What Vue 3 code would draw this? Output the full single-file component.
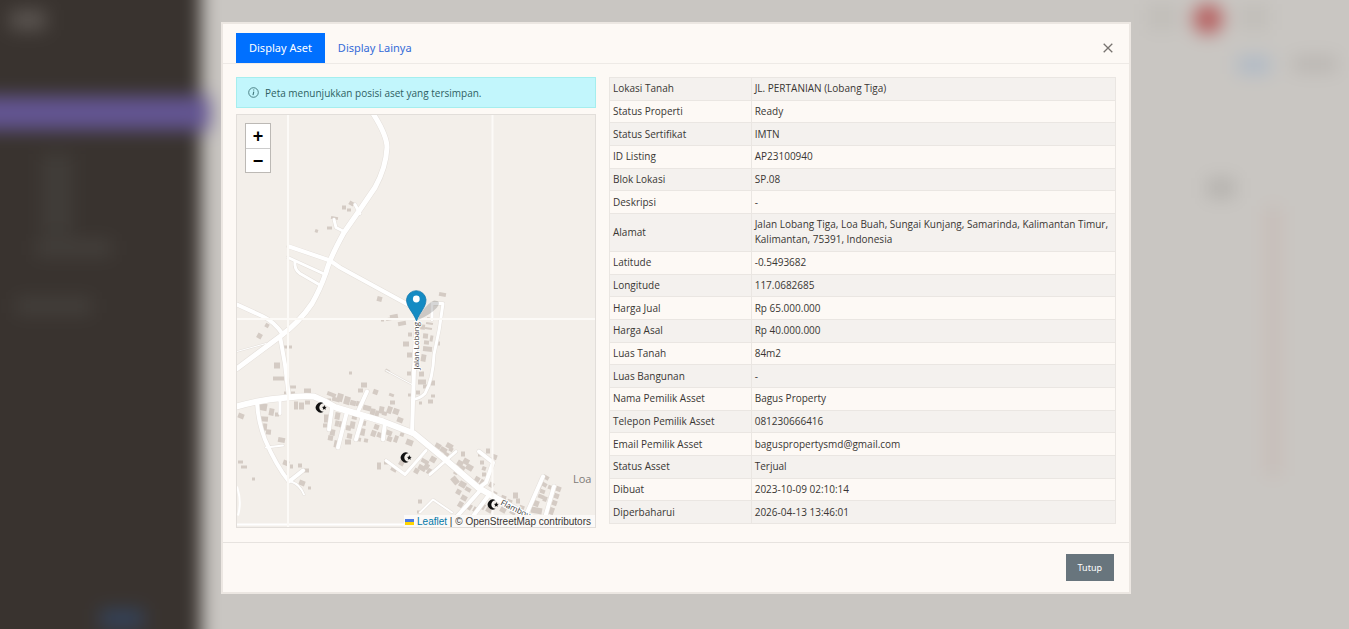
<script setup>
const tabs = [
  { label: 'Display Aset', active: true },
  { label: 'Display Lainya', active: false },
]

const rows = [
  ['Lokasi Tanah', 'JL. PERTANIAN (Lobang Tiga)'],
  ['Status Properti', 'Ready'],
  ['Status Sertifikat', 'IMTN'],
  ['ID Listing', 'AP23100940'],
  ['Blok Lokasi', 'SP.08'],
  ['Deskripsi', '-'],
  ['Alamat', 'Jalan Lobang Tiga, Loa Buah, Sungai Kunjang, Samarinda, Kalimantan Timur, Kalimantan, 75391, Indonesia'],
  ['Latitude', '-0.5493682'],
  ['Longitude', '117.0682685'],
  ['Harga Jual', 'Rp 65.000.000'],
  ['Harga Asal', 'Rp 40.000.000'],
  ['Luas Tanah', '84m2'],
  ['Luas Bangunan', '-'],
  ['Nama Pemilik Asset', 'Bagus Property'],
  ['Telepon Pemilik Asset', '081230666416'],
  ['Email Pemilik Asset', 'baguspropertysmd@gmail.com'],
  ['Status Asset', 'Terjual'],
  ['Dibuat', '2023-10-09 02:10:14'],
  ['Diperbaharui', '2026-04-13 13:46:01'],
]

const roads = [
  { w: 5, d: 'M373 114 Q387 136 387 148 Q386 168 375 188 L360 210 L344 233 Q330 258 326 273 Q320 290 312 304 Q300 322 280 337 L237 369' },
  { w: 4, d: 'M289 247 L330 261 L340 268 L417 310' },
  { w: 3, d: 'M288 258 L323 274' },
  { w: 3, d: 'M295 262 Q294 270 300 274 L319 285' },
  { w: 4, d: 'M237 305 L263 317 Q274 322 283 335' },
  { w: 4, d: 'M280 337 L285 365 L289 398' },
  { w: 6, d: 'M237 407 Q260 400 288 398 Q304 396 314 397 Q326 402 336 408 L383 422 L414 434 L443 458 L478 488 L530 518' },
  { w: 4, d: 'M257 403 Q258 422 265 440 Q276 466 289 482 L303 471' },
  { w: 2, d: 'M291 482 Q300 485 304 495' },
  { w: 3, d: 'M280 400 V414' },
  { w: 2, d: 'M266 448 L283 446' },
  { w: 4, d: 'M332 408 L329 430' },
  { w: 4, d: 'M347 412 L338 448' },
  { w: 4, d: 'M363 416 L356 440' },
  { w: 4, d: 'M358 412 L367 392' },
  { w: 4, d: 'M385 423 L383 440' },
  { w: 4, d: 'M412 434 L414 370 L417 316' },
  { w: 3, d: 'M432 320 V304 H443 Q440 330 434 355 Q433 380 425 394 Q420 399 413 400' },
  { w: 3, d: 'M386 461 L405 475 L426 451' },
  { w: 3, d: 'M430 475 L456 452' },
  { w: 4, d: 'M479 452 L493 463 L486 483 L478 489' },
  { w: 4, d: 'M481 490 L456 518' },
  { w: 4, d: 'M490 494 L472 518' },
  { w: 2, d: 'M420 513 L433 500 L452 513' },
  { w: 4, d: 'M525 518 L543 477' },
  { w: 4, d: 'M545 518 L554 487' },
  { w: 3, d: 'M360 214 L355 205' },
  { w: 3, d: 'M344 232 L336 228 L334 220' },
  { w: 1, d: 'M386 371 L412 385' },
  { w: 1, d: 'M237 352 L266 344' },
]

// x, y, width, height, rotation
const buildings = [
  [349,202,5,4,30],[342,206,4,4,0],[347,209,4,3,0],[331,217,7,3,10],[327,227,5,3,0],[315,230,3,3,20],
  [377,297,5,5,15],[386,318,7,3,-10],[381,320,3,2,0],[390,315,8,5,-10],[398,322,8,4,-10],[439,293,7,4,10],
  [408,333,4,4,0],[403,342,6,5,0],[407,353,5,5,0],[420,325,5,5,5],[423,334,5,5,5],[424,341,5,4,5],[423,347,9,5,5],[421,355,5,7,10],[436,342,4,4,0],
  [418,326,2,8,0],[427,318,7,2,10],[426,323,7,2,10],[425,328,7,2,10],[430,336,3,6,10],
  [265,324,4,4,30],[257,334,5,5,30],[284,346,8,3,0],[274,363,6,6,0],[273,377,11,4,0],[290,386,6,3,0],[284,392,3,3,0],[291,392,4,4,0],[304,389,7,6,0],
  [349,372,3,3,0],[385,370,5,3,30],[361,383,6,5,0],[358,389,5,4,0],[373,390,5,5,20],[389,394,5,3,20],[390,401,5,4,0],[407,372,4,4,0],[408,394,4,3,0],
  [419,372,5,5,0],[418,380,8,5,0],[423,385,4,4,0],[431,381,4,5,0],[416,391,4,4,0],[419,402,3,3,0],[428,400,5,4,0],[431,395,4,3,0],
  [259,404,8,7,10],[269,409,5,7,10],[275,413,4,4,0],[260,417,8,5,5],[263,424,4,7,5],[266,430,5,5,5],[238,414,6,5,20],[278,438,7,5,10],
  [294,402,4,8,0],[299,403,5,7,0],[305,401,5,4,0],[289,394,4,4,0],
  [327,393,9,4,20],[332,398,8,4,15],[337,394,6,8,15],[344,397,6,8,15],[350,401,6,5,15],[356,402,6,5,15],[327,399,4,6,0],
  [324,415,5,8,0],[323,424,4,4,0],[335,413,5,7,10],[339,422,5,6,10],[335,421,4,6,10],[330,430,5,6,10],[328,436,5,5,10],[346,426,5,5,10],[347,434,5,5,10],[334,441,5,7,10],[345,440,6,5,0],
  [352,415,5,5,10],[350,422,5,7,10],[361,421,5,5,10],[360,429,5,7,10],[357,438,4,4,10],[364,439,4,4,10],
  [363,406,8,5,15],[370,409,5,8,10],[375,411,4,6,10],[379,407,5,7,10],[382,412,5,4,15],[387,407,5,7,20],[393,409,6,6,20],[397,418,6,5,20],
  [374,425,5,5,20],[371,431,5,6,20],[377,433,5,5,20],[386,431,6,5,20],[387,437,5,5,20],[394,436,4,7,20],[400,433,4,4,20],[406,440,7,6,20],
  [238,461,5,3,0],[241,466,6,3,0],[252,478,3,3,0],[283,461,6,5,20],[290,465,3,4,0],[298,464,4,4,0],[303,469,6,4,0],[299,481,6,5,20],[308,487,3,3,0],
  [377,463,4,7,0],[384,460,4,5,0],[391,467,6,5,30],[399,461,5,5,30],[414,469,5,5,30],
  [418,500,4,4,0],[417,511,4,3,0],
  [435,444,6,5,30],[440,448,7,5,30],[446,444,7,5,30],[444,453,5,4,30],[449,448,4,4,30],[421,460,8,4,30],[418,466,8,5,30],[424,464,5,6,30],[427,469,5,6,30],[430,457,6,6,30],
  [461,452,4,5,0],[457,461,6,6,30],[463,459,6,6,30],[466,465,7,6,30],[459,466,6,5,30],[454,470,4,5,30],
  [478,453,4,4,0],[486,449,4,5,0],[492,455,5,5,20],[480,461,4,4,0],[482,467,4,4,20],[474,477,5,8,30],[480,480,5,6,30],[489,483,5,5,30],[482,473,4,4,0],
  [452,477,6,8,-40],[459,482,7,6,30],[465,488,6,4,30],[456,490,5,5,30],[461,496,6,5,30],[458,502,5,6,30],[465,504,7,6,30],[473,508,6,5,30],[480,504,5,6,30],[486,508,6,5,30],
  [492,492,5,4,30],[501,496,5,5,20],[507,500,5,5,20],[513,493,5,6,0],[516,499,4,5,0],[519,506,5,6,20],[500,508,6,5,30],[510,510,6,5,30],
  [543,476,6,4,30],[541,483,6,4,30],[540,490,5,4,20],[538,495,6,4,20],[533,501,6,6,20],[531,508,11,6,10],[548,486,5,4,20],[556,487,5,5,20],[554,494,5,5,20],[552,501,5,5,20],[549,508,5,7,20],[543,497,4,5,20],
  [538,486,3,5,20],
]

const mosques = [[321, 408], [406, 458], [493, 505]]
</script>

<template>
  <div class="screen">
    <div class="dashboard" aria-hidden="true">
      <div class="sidebar">
        <div class="brand"></div>
        <div class="current"></div>
        <div class="entry short"></div>
        <div class="entry nested"></div>
        <div class="entry"></div>
        <div class="account"></div>
      </div>
      <div class="content">
        <div class="topbar"><i class="chip"></i><i class="avatar"></i><i class="chip"></i></div>
        <div class="crumbs"><i class="crumb"></i><i class="here"></i></div>
        <div class="listing"><i class="state"></i><i class="action"></i></div>
      </div>
    </div>

    <section class="modal" role="dialog" aria-label="Display Aset">
      <header class="head">
        <nav class="tabs">
          <a v-for="t in tabs" :key="t.label" href="#" class="tab" :class="{ active: t.active }">{{ t.label }}</a>
        </nav>
        <button class="close" type="button" aria-label="Close">
          <svg width="10" height="10" viewBox="0 0 10 10"><path d="M.7.7l8.6 8.6M9.3.7L.7 9.3" stroke="#77736f" stroke-width="1.3" fill="none" /></svg>
        </button>
      </header>

      <div class="body">
        <div class="left">
          <div class="alert">
            <svg width="11" height="11" viewBox="0 0 11 11" fill="none" stroke="#3e7578"><circle cx="5.5" cy="5.5" r="4.8" stroke-width=".9" /><path d="M5.8 4.6L5 8.2" stroke-width="1.1" /><path d="M5.7 2.6v1" stroke-width="1.1" /></svg>
            <span>Peta menunjukkan posisi aset yang tersimpan.</span>
          </div>
          <div class="map">
            <svg class="tiles" viewBox="237 115 358 413" preserveAspectRatio="xMidYMid slice">
              <rect x="0" y="0" width="900" height="800" fill="#f3efea" />
              <g fill="#d4cbc4">
                <rect v-for="(b, i) in buildings" :key="i" :x="b[0]" :y="b[1]" :width="b[2]" :height="b[3]" :transform="`rotate(${b[4]} ${b[0] + b[2] / 2} ${b[1] + b[3] / 2})`" />
              </g>
              <g fill="none" stroke="#e4dfda" stroke-linecap="round" stroke-linejoin="round">
                <path v-for="(r, i) in roads" :key="i" :d="r.d" :stroke-width="r.w + 1" />
              </g>
              <g fill="none" stroke="#fff" stroke-linecap="round" stroke-linejoin="round">
                <path v-for="(r, i) in roads" :key="i" :d="r.d" :stroke-width="r.w" />
              </g>
              <path d="M237 487 Q242 502 238 516 M237 525 H410" fill="none" stroke="#fff" stroke-width="2" />
              <path d="M288 115V528M492.500 115V528M237 319.500H595" stroke="#fcfaf7" stroke-width="2" />
              <g v-for="m in mosques" :key="m[0]" :transform="`translate(${m[0]} ${m[1]})`">
                <path d="M2.600 4.300A5.100 5.100 0 1 1 2.600-4.300A4 4 0 1 0 2.600 4.300Z" fill="#111" />
                <path d="M3.300-2.400l.7 1.600 1.700.2-1.300 1.200.3 1.700-1.400-.9-1.500.9.400-1.700L.9-.6l1.700-.2z" fill="#111" />
              </g>
              <g class="street" fill="#3c3a38" stroke="#fff" stroke-width="2" paint-order="stroke">
                <text transform="translate(419 370) rotate(-90)">Jalan Lobang</text>
                <text transform="translate(500 505) rotate(26)">Flamboyan</text>
              </g>
              <text class="place" x="573" y="483" fill="#7e7b78">Loa</text>
              <path d="M417 321Q424 306 434 301Q442 301 437 308Q431 315 417 321Z" fill="#000" opacity=".16" />
              <path d="M416.500 321.500C413 312 406.500 308 406.500 300A9.800 9.800 0 0 1 426 300C426 308 420 312 416.500 321.500Z" fill="#158bc3" stroke="#1478ad" stroke-width=".8" />
              <circle cx="416.300" cy="299.500" r="3.400" fill="#fff" />
            </svg>
            <div class="zoom">
              <button type="button" aria-label="Zoom in">+</button>
              <button type="button" aria-label="Zoom out">−</button>
            </div>
            <div class="credit">
              <svg class="flag" width="9" height="6" viewBox="0 0 9 6"><path fill="#4c7be1" d="M0 0h9v3H0z" /><path fill="#ffd500" d="M0 3h9v3H0z" /></svg>
              <a href="#">Leaflet</a> | © OpenStreetMap contributors
            </div>
          </div>
        </div>

        <table class="details">
          <tbody>
            <tr v-for="r in rows" :key="r[0]">
              <th scope="row">{{ r[0] }}</th>
              <td>{{ r[1] }}</td>
            </tr>
          </tbody>
        </table>
      </div>

      <footer class="foot">
        <button class="dismiss" type="button">Tutup</button>
      </footer>
    </section>
  </div>
</template>

<style>
body {
  margin: 0;
  background: #c9c6c2;
}
</style>

<style scoped>
* {
  box-sizing: border-box;
}

.screen {
  position: relative;
  display: flow-root;
  min-height: 100vh;
  overflow: hidden;
  font-family: "Open Sans", "Noto Sans", sans-serif;
  font-size: 10px;
  color: #393633;
}

.dashboard {
  position: absolute;
  inset: -40px;
  display: flex;
  filter: blur(9px);
}

.sidebar {
  width: 241px;
  display: flex;
  flex-direction: column;
  padding: 40px 0;
  background: #39332f;
}

.brand {
  width: 36px;
  height: 20px;
  margin: 10px 0 66px 50px;
  background: #5b5551;
}

.current {
  position: relative;
  width: 250px;
  height: 34px;
  background: #635592;
}

.entry {
  width: 76px;
  height: 16px;
  margin: 0 0 42px 56px;
  background: #44403c;
}

.entry.short {
  width: 30px;
  height: 80px;
  margin: 24px 0 6px 82px;
  background: #413d39;
}

.entry.nested {
  margin-left: 76px;
}

.account {
  width: 44px;
  height: 20px;
  margin: auto 0 0 140px;
  background: #344259;
}

.content {
  flex: 1;
  padding: 40px;
  background: #c9c6c2;
}

.topbar,
.crumbs,
.listing {
  display: flex;
  justify-content: flex-end;
}

.topbar {
  height: 44px;
  gap: 16px;
  padding: 4px 80px 0 0;
}

.chip {
  width: 30px;
  height: 26px;
  background: #c1beb9;
}

.avatar {
  width: 30px;
  height: 30px;
  border-radius: 15px;
  background: #b65f5f;
}

.crumbs {
  height: 134px;
  gap: 22px;
  padding: 12px 12px 0 0;
}

.crumb {
  width: 34px;
  height: 18px;
  background: #b0bac6;
}

.here {
  width: 44px;
  height: 16px;
  background: #bab6b2;
}

.listing {
  gap: 30px;
  padding-right: 68px;
}

.state {
  width: 28px;
  height: 20px;
  background: #b5b2ae;
}

.action {
  width: 16px;
  height: 270px;
  margin-top: 28px;
  background: #c8bdb8;
}

.modal {
  position: relative;
  margin: 22px 218px 35px 221px;
  border: 2px solid #ece7e2;
  background: #fdf9f5;
}

.head {
  display: flex;
  justify-content: space-between;
  align-items: center;
  height: 40px;
  padding: 9px 16px 0 13px;
  border-bottom: 1px solid #eeeae6;
}

.tabs {
  display: flex;
}

.tab {
  padding: 6px 13px;
  font-family: "Noto Sans", "Open Sans", sans-serif;
  font-size: 11px;
  line-height: 18px;
  color: #356bd8;
  text-decoration: none;
}

.tab.active {
  background: #0070ff;
  color: #fff;
}

.close {
  display: flex;
  padding: 0;
  border: 0;
  background: none;
}

.body {
  display: grid;
  grid-template-columns: minmax(0, 360fr) minmax(0, 507fr);
  gap: 13px;
  padding: 13px 13px 14px;
}

.left {
  display: flex;
  flex-direction: column;
  gap: 6px;
}

.alert {
  display: flex;
  align-items: center;
  gap: 6px;
  height: 31px;
  padding: 0 11px;
  border: 1px solid #a5eeee;
  background: #c2f6fc;
  color: #2f5f63;
}

.map {
  position: relative;
  flex: 1;
  min-height: 414px;
  border: 1px solid #e2deda;
  overflow: hidden;
}

.tiles {
  position: absolute;
  width: 100%;
  height: 100%;
}

.street {
  font-size: 8px;
}

.place {
  font-size: 11px;
}

.zoom {
  position: absolute;
  top: 8px;
  left: 8px;
  border: 1px solid #bcb9b5;
}

.zoom button {
  display: block;
  width: 24px;
  height: 24px;
  padding: 0;
  border: 0;
  background: #fff;
  color: #000;
  font: bold 18px/24px "Liberation Sans", sans-serif;
}

.zoom button + button {
  border-top: 1px solid #ccc;
  line-height: 22px;
}

.credit {
  position: absolute;
  right: 0;
  bottom: 0;
  height: 12px;
  padding: 0 4px 0 1px;
  background: #fbf9f7;
  font: 10px/13px "Liberation Sans", Arial, sans-serif;
  white-space: nowrap;
}

.flag {
  margin-right: 3px;
}

.credit a {
  color: #0078a8;
  text-decoration: none;
}

.details {
  width: 100%;
  height: 447px;
  align-self: start;
  border-collapse: collapse;
  line-height: 15px;
}

.details th,
.details td {
  padding: 3px;
  border: 1px solid #eae6e2;
  font-weight: 400;
  text-align: left;
  vertical-align: middle;
}

.details th {
  width: 28%;
}

.details tr:nth-child(odd) {
  background: #f4f1ee;
}

.foot {
  display: flex;
  justify-content: flex-end;
  padding: 11px 15px;
  border-top: 1px solid #e7e3df;
}

.dismiss {
  height: 27px;
  padding: 0 12px;
  border: 0;
  background: #68757d;
  color: #fff;
  font: 9px "Noto Sans", "Open Sans", sans-serif;
}
</style>
